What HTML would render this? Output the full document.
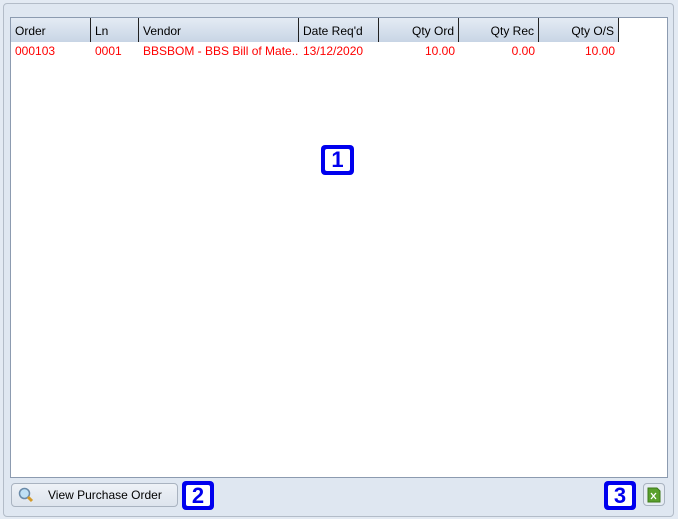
<!DOCTYPE html>
<html><head><style>
body{margin:0;width:678px;height:519px;background:#e3eaf3;font-family:"Liberation Sans",sans-serif;font-size:12px;position:relative;overflow:hidden}
.panel{position:absolute;left:3px;top:3px;width:669px;height:512px;border:1px solid #b3bcc8;border-radius:4px;background:#dfe7f1}
.grid{position:absolute;left:10px;top:17px;width:656px;height:459px;border:1px solid #8c9bb0;background:#fff}
.hdr{position:absolute;top:0;height:24px;background:linear-gradient(#e4ebf4,#c8d5e5);border-right:1px solid #222;box-sizing:border-box;line-height:26px;padding:0 4px;color:#000}
.c{position:absolute;top:26px;color:#f00;padding:0 4px;box-sizing:border-box;line-height:14px;overflow:hidden;white-space:nowrap}
.r{text-align:right}
.badge{position:absolute;background:#0000ee;border-radius:4px;}
.badge div{position:absolute;left:4px;top:4px;right:4px;bottom:4px;background:#fff;border-radius:2px;color:#0000ee;font-weight:bold;font-size:22px;text-align:center;line-height:22px}
.btn{position:absolute;left:11px;top:483px;width:167px;height:24px;border:1px solid #a9b3c0;border-radius:4px;background:linear-gradient(#eef2f7,#dde4ed);box-sizing:border-box;line-height:22px;font-size:12px}
</style></head><body>
<div class="panel"></div>
<div class="grid">
<div class="hdr" style="left:0;width:80px">Order</div>
<div class="hdr" style="left:80px;width:48px">Ln</div>
<div class="hdr" style="left:128px;width:160px">Vendor</div>
<div class="hdr" style="left:288px;width:80px">Date Req'd</div>
<div class="hdr r" style="left:368px;width:80px">Qty Ord</div>
<div class="hdr r" style="left:448px;width:80px">Qty Rec</div>
<div class="hdr r" style="left:528px;width:80px">Qty O/S</div>
<div class="c" style="left:0;width:80px">000103</div>
<div class="c" style="left:80px;width:48px">0001</div>
<div class="c" style="left:128px;width:160px">BBSBOM - BBS Bill of Mate...</div>
<div class="c" style="left:288px;width:80px">13/12/2020</div>
<div class="c r" style="left:368px;width:80px">10.00</div>
<div class="c r" style="left:448px;width:80px">0.00</div>
<div class="c r" style="left:528px;width:80px">10.00</div>
</div>
<div class="badge" style="left:321px;top:145px;width:33px;height:30px"><div>1</div></div>
<div class="btn">
<svg style="position:absolute;left:6px;top:3px" width="16" height="16" viewBox="0 0 16 16"><circle cx="6.5" cy="6.5" r="5" fill="#bfe0f5" stroke="#6a8aa8" stroke-width="1.5"/><path d="M10 10l4 4" stroke="#d49a2a" stroke-width="3"/></svg>
<span style="position:absolute;left:36px;top:0">View Purchase Order</span></div>
<div class="badge" style="left:182px;top:481px;width:32px;height:29px"><div>2</div></div>
<div class="badge" style="left:604px;top:481px;width:32px;height:29px"><div>3</div></div>
<div style="position:absolute;left:643px;top:483px;width:22px;height:23px;border:1px solid #a9b3c0;border-radius:4px;box-sizing:border-box;background:#e6ecf3">
<svg style="position:absolute;left:3px;top:3px" width="14" height="16" viewBox="0 0 14 16"><path d="M1 1h9l3 3v11H1z" fill="#5aa02c" stroke="#3d7a1a"/><path d="M4 6l5 6M9 6l-5 6" stroke="#fff" stroke-width="1.3"/></svg></div>
</body></html>
